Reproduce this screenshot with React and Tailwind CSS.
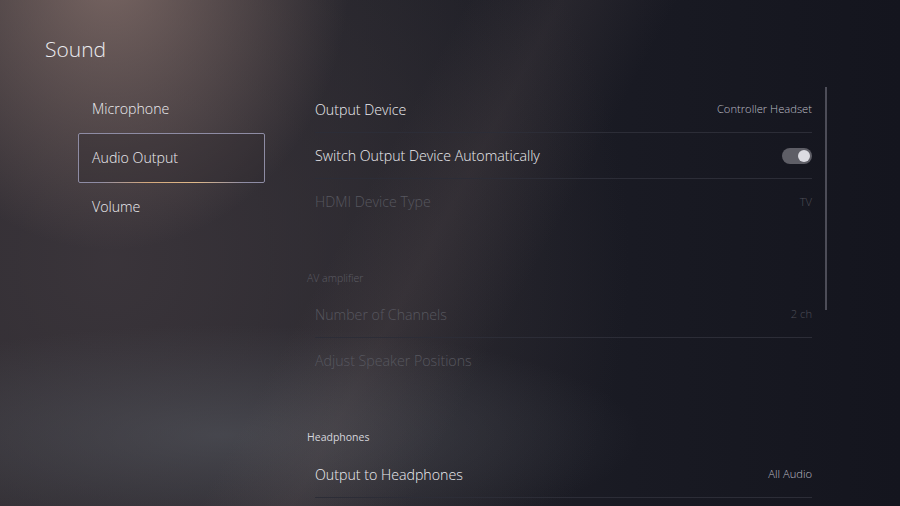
import React from 'react';

const font = { fontFamily: '"Open Sans", "Noto Sans", sans-serif' };

function Row({ label, value, dim, toggle, divider = true }) {
  return (
    <div className={`flex items-center justify-between h-[46px] ${divider ? 'border-b border-[#2c2d37]' : ''}`}>
      <span className={`text-[14.2px] font-light ${dim ? 'text-[#57575f]' : 'text-[#ececf0]'}`}>{label}</span>
      {value && <span className={`text-[11.2px] font-light ${dim ? 'text-[#4e4e57]' : 'text-[#bcbcc4]'}`}>{value}</span>}
      {toggle && (
        <span className="relative w-[30px] h-[16px] rounded-full bg-[#5e5e66]">
          <span className="absolute right-[2px] top-[2px] w-[12px] h-[12px] rounded-full bg-[#dcdce2]" />
        </span>
      )}
    </div>
  );
}

function MenuItem({ label, active }) {
  return (
    <div className={`relative flex items-center px-[13px] rounded-[2px] ${active ? 'h-[50px] border border-[#8e8ca4] bg-[#2f2b30]/40' : 'h-[48px] border border-transparent'}`}>
      <span className="text-[14.2px] font-light text-[#ececf0]">{label}</span>
      {active && (
        <span className="absolute left-[20px] right-[20px] -bottom-[1px] h-[1px] bg-[linear-gradient(90deg,transparent,#d4a87c,#e0b98a,transparent)]" />
      )}
    </div>
  );
}

export default function App() {
  return (
    <div
      className="w-[900px] h-[506px] overflow-hidden relative bg-[#16171f] bg-[radial-gradient(ellipse_240px_280px_at_110px_-30px,rgba(150,125,118,0.7),transparent),radial-gradient(ellipse_420px_110px_at_220px_435px,rgba(95,100,108,0.45),transparent),radial-gradient(ellipse_520px_540px_at_110px_260px,rgba(60,54,60,0.9),transparent),linear-gradient(90deg,#29272c_0%,#222229_40%,#191a23_70%,#14151e_100%)]"
      style={font}
    >
      <div className="absolute inset-0 bg-[linear-gradient(118deg,transparent_40%,rgba(130,110,108,0.13)_48%,transparent_58%)]" />
      <div className="relative flex flex-col">
        <h1 className="pl-[45px] pt-[34px] text-[21px] leading-[30px] font-light text-[#ececf0]">Sound</h1>
        <div className="flex pt-[21px]">
          <div className="ml-[78px] w-[187px] flex flex-col">
            <MenuItem label="Microphone" />
            <MenuItem label="Audio Output" active />
            <MenuItem label="Volume" />
          </div>
          <div className="ml-[42px] w-[505px] flex flex-col mt-[2px]">
            <div className="pl-[8px]">
              <Row label="Output Device" value="Controller Headset" />
              <Row label="Switch Output Device Automatically" toggle />
              <Row label="HDMI Device Type" value="TV" dim divider={false} />
            </div>
            <div className="h-[45px]" />
            <div className="text-[10.5px] leading-[16px] font-light text-[#5c5c64]">AV amplifier</div>
            <div className="pl-[8px] mt-[6px]">
              <Row label="Number of Channels" value="2 ch" dim />
              <Row label="Adjust Speaker Positions" dim divider={false} />
            </div>
            <div className="h-[45px]" />
            <div className="text-[10.5px] leading-[16px] text-[#d6d6dc]">Headphones</div>
            <div className="pl-[8px] mt-[7px]">
              <Row label="Output to Headphones" value="All Audio" />
            </div>
          </div>
          <div className="ml-[13px] mt-[2px] w-[2px] h-[223px] bg-[#4d4d58]" />
        </div>
      </div>
    </div>
  );
}
